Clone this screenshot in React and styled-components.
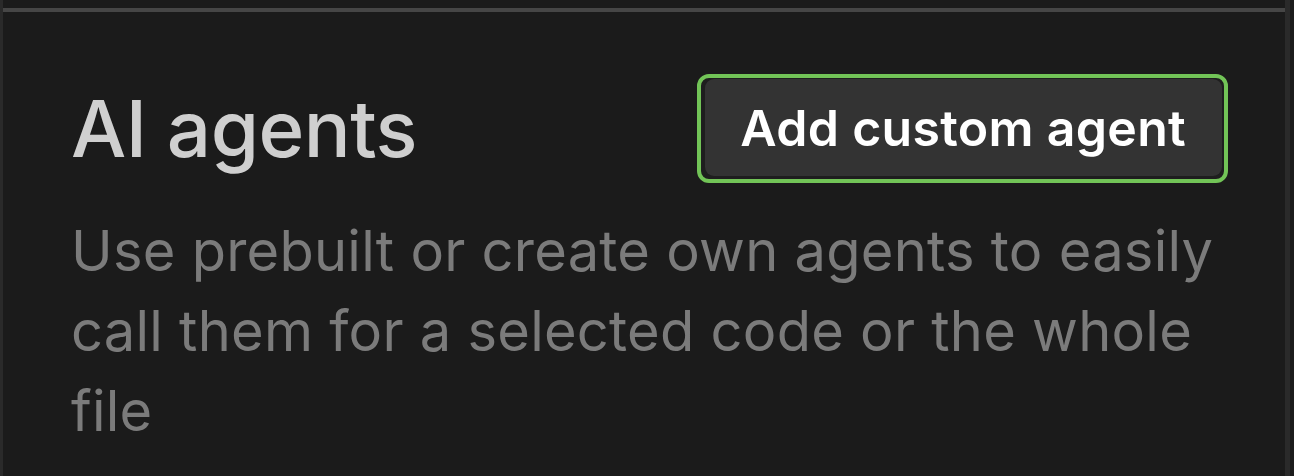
import React from "react";
import styled, { createGlobalStyle } from "styled-components";

const Global = createGlobalStyle`
  html, body { margin: 0; padding: 0; background: #1b1b1b; }
  body { font-family: Inter, "Noto Sans", sans-serif; -webkit-font-smoothing: antialiased; }
`;

const Frame = styled.div`
  display: flex;
  width: 1294px;
  height: 476px;
  background: #1b1b1b;
  overflow: hidden;
`;

const EdgeStrip = styled.div`
  flex: 0 0 ${(p) => p.$w}px;
  background: #2a2a2a;
`;

const Tail = styled.div`
  flex: 1 1 auto;
  background: #1c1c1c;
`;

const Main = styled.div`
  flex: 0 0 1282px;
  padding-top: 8px;
  box-sizing: border-box;
`;

const Divider = styled.div`
  height: 4px;
  background: #464646;
`;

const Content = styled.section`
  padding: 62px 57px 0 68px;
`;

const Header = styled.div`
  display: flex;
  align-items: center;
  justify-content: space-between;
`;

const Title = styled.h1`
  margin: 0;
  font-size: 78px;
  font-weight: 500;
  color: #cfcfcf;
  letter-spacing: -0.5px;
  line-height: 108px;
`;

const FocusRing = styled.div`
  display: flex;
  border: 4px solid #72c457;
  border-radius: 12px;
  background: #1e1e1e;
`;

const Button = styled.button`
  height: 97px;
  padding: 0 36px 0 35px;
  background: #333333;
  color: #ffffff;
  border: none;
  border-radius: 9px;
  margin: 1px 2px 3px 4px;
  font-family: Inter, "Noto Sans", sans-serif;
  font-size: 50px;
  font-weight: 600;
  letter-spacing: 0.3px;
  cursor: pointer;
`;

const Description = styled.p`
  margin: 28px 0 0 0;
  font-size: 56px;
  line-height: 80px;
  color: #7b7b7b;
  font-weight: 400;
  letter-spacing: 0.25px;
  max-width: 1160px;
`;

export default function App() {
  return (
    <>
      <Global />
      <Frame>
        <EdgeStrip $w={3} />
        <Main>
          <Divider />
          <Content>
            <Header>
              <Title>AI agents</Title>
              <FocusRing>
                <Button>Add custom agent</Button>
              </FocusRing>
            </Header>
            <Description>
              Use prebuilt or create own agents to easily call them for a
              selected code or the whole file
            </Description>
          </Content>
        </Main>
        <EdgeStrip $w={5} />
        <Tail />
      </Frame>
    </>
  );
}
